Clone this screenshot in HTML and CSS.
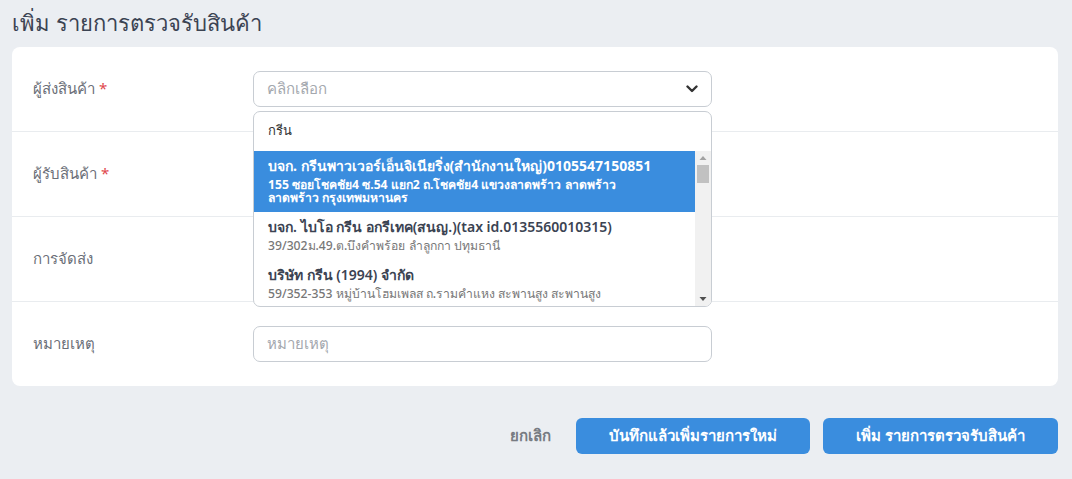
FILE: index.html
```html
<!DOCTYPE html>
<html lang="th">
<head>
<meta charset="utf-8">
<link rel="stylesheet" href="styles.css">
</head>
<body>
<div class="page">
  <h1 class="title">เพิ่ม รายการตรวจรับสินค้า</h1>
  <div class="card">
    <div class="row">
      <div class="label">ผู้ส่งสินค้า <span class="req">*</span></div>
      <div class="field">
        <div class="select">
          <span class="placeholder">คลิกเลือก</span>
          <svg class="chev" width="12" height="8" viewBox="0 0 12 8"><path d="M1.5 1.5 L6 6 L10.5 1.5" fill="none" stroke="#333" stroke-width="2.4" stroke-linecap="round" stroke-linejoin="round"/></svg>
        </div>
        <div class="dropdown">
          <div class="search">กรีน</div>
          <div class="options">
            <div class="list">
              <div class="opt active">
                <div class="opt-title">บจก. กรีนพาวเวอร์เอ็นจิเนียริ่ง(สำนักงานใหญ่)0105547150851</div>
                <div class="opt-sub">155 ซอยโชคชัย4 ซ.54 แยก2 ถ.โชคชัย4 แขวงลาดพร้าว ลาดพร้าว ลาดพร้าว กรุงเทพมหานคร</div>
              </div>
              <div class="opt">
                <div class="opt-title">บจก. ไบโอ กรีน อกรีเทค(สนญ.)(tax id.0135560010315)</div>
                <div class="opt-sub">39/302ม.49.ต.บึงคำพร้อย ลำลูกกา ปทุมธานี</div>
              </div>
              <div class="opt">
                <div class="opt-title">บริษัท กรีน (1994) จำกัด</div>
                <div class="opt-sub">59/352-353 หมู่บ้านโฮมเพลส ถ.รามคำแหง สะพานสูง สะพานสูง</div>
              </div>
            </div>
            <div class="scrollbar">
              <svg class="arrow" width="16" height="14" viewBox="0 0 16 14"><path d="M4.5 9 L8 5 L11.5 9 Z" fill="#a3a3a3"/></svg>
              <div class="thumb"></div>
              <div class="track-space"></div>
              <svg class="arrow" width="16" height="14" viewBox="0 0 16 14"><path d="M4.5 5 L8 9 L11.5 5 Z" fill="#505050"/></svg>
            </div>
          </div>
        </div>
      </div>
    </div>
    <div class="row">
      <div class="label">ผู้รับสินค้า <span class="req">*</span></div>
      <div class="field"></div>
    </div>
    <div class="row">
      <div class="label">การจัดส่ง</div>
      <div class="field"></div>
    </div>
    <div class="row">
      <div class="label">หมายเหตุ</div>
      <div class="field">
        <div class="input"><span class="placeholder">หมายเหตุ</span></div>
      </div>
    </div>
  </div>
  <div class="actions">
    <span class="cancel">ยกเลิก</span>
    <button class="btn btn-a">บันทึกแล้วเพิ่มรายการใหม่</button>
    <button class="btn btn-b">เพิ่ม รายการตรวจรับสินค้า</button>
  </div>
</div>
</body>
</html>
```

FILE: styles.css
```css
* { box-sizing: border-box; }
html, body { margin: 0; padding: 0; }
body {
  background: #ebeef2;
  font-family: "Noto Sans", "DejaVu Sans", sans-serif;
  color: #333;
  width: 1072px;
  height: 479px;
  overflow: hidden;
}
.page {
  padding: 7px 14px 0 12px;
}
.title {
  margin: 0 0 10px 0;
  font-size: 22px;
  font-weight: 400;
  color: #3b4352;
  line-height: 30px;
}
.card {
  background: #fff;
  border-radius: 8px;
}
.row {
  display: grid;
  grid-template-columns: 241px 459px;
  align-items: center;
  height: 85px;
  border-top: 1px solid #e9ecef;
}
.row:first-child { border-top: none; height: 84px; }
.label {
  padding-left: 21px;
  font-size: 15px;
  color: #6b6f78;
}
.req { color: #e0474c; }
.field { position: relative; }
.select, .input {
  height: 36px;
  border: 1px solid #c8cdd3;
  border-radius: 7px;
  display: flex;
  align-items: center;
  padding: 0 13px;
  font-size: 15px;
}
.select { justify-content: space-between; }
.placeholder { color: #a4a8ae; }
.dropdown {
  position: absolute;
  left: 0;
  top: 40px;
  width: 459px;
  background: #fff;
  border: 1px solid #c8cdd3;
  border-radius: 7px;
  overflow: hidden;
  z-index: 5;
}
.search {
  height: 39px;
  padding: 8px 14px 0;
  font-size: 13px;
  color: #333;
}
.options {
  display: flex;
  height: 155px;
}
.list {
  flex: 1;
  overflow: hidden;
}
.scrollbar {
  width: 16px;
  background: #f1f1f1;
  display: flex;
  flex-direction: column;
  align-items: center;
}
.arrow { display: block; flex: none; }
.thumb {
  width: 12px;
  height: 18px;
  background: #c1c1c1;
  flex: none;
}
.track-space { flex: 1; }
.opt {
  padding: 5px 14px 8px;
}
.opt.active {
  background: #3a8dde;
  color: #fff;
}
.opt-title {
  font-size: 14px;
  font-weight: 600;
  color: #3b4352;
  line-height: 20px;
  white-space: nowrap;
}
.opt-sub {
  margin-top: 2px;
  padding-right: 24px;
  font-size: 12.2px;
  font-weight: 500;
  color: #777;
  line-height: 13px;
}
.opt.active .opt-title,
.opt.active .opt-sub { color: #fff; font-weight: 700; }
.actions {
  display: flex;
  justify-content: flex-end;
  align-items: center;
  margin-top: 32px;
  gap: 13px;
}
.cancel {
  font-size: 15px;
  color: #777b82;
  font-weight: 600;
  margin-right: 12px;
}
.btn {
  height: 36px;
  border: none;
  border-radius: 6px;
  background: #3a8dde;
  color: #fff;
  font-family: inherit;
  font-size: 15px;
  font-weight: 600;
  padding: 0;
}
.btn-a { width: 234px; }
.btn-b { width: 235px; }
```
